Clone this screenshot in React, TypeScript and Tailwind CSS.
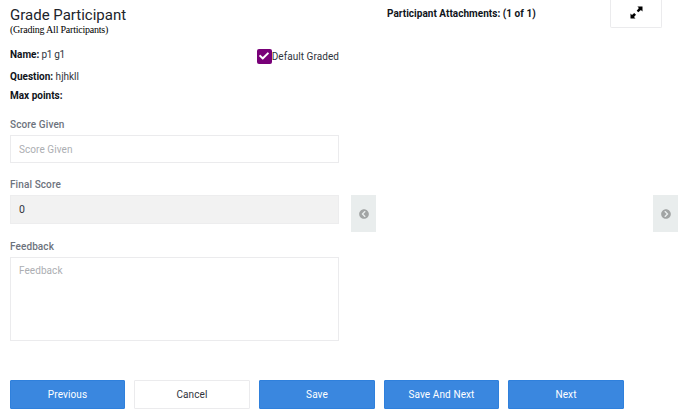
import { FaCheck, FaChevronCircleLeft, FaChevronCircleRight } from 'react-icons/fa'

interface ActionButtonProps {
  label: string
  width: string
  outline?: boolean
}

const ActionButton = ({ label, width, outline }: ActionButtonProps) => (
  <button
    className={`h-[29px] shrink-0 rounded-[1px] border text-[10px] tracking-[0.1px] ${width} ${
      outline ? 'border-[#ebebed] bg-white text-[#30343c]' : 'border-[#2f80dc] bg-[#3a87df] text-white'
    }`}
  >
    {label}
  </button>
)

const FieldLabel = ({ children }: { children: string }) => (
  <div className="h-[18px] pt-px text-[10px] leading-[14px] font-medium tracking-[0.1px] text-[#6d737d]">{children}</div>
)

const ExpandIcon = () => (
  <svg viewBox="0 0 13 13" className="h-[13px] w-[13px]" fill="#000">
    <path d="M7.4 0.5h5.1v5L10.9 4.1 8.3 6.3 6.7 4.7 8.9 2.1zM0.5 12.5V7.5L2 9 4.2 7 6 8.8 4 11 5.5 12.5z" />
  </svg>
)

const App = () => (
  <div className="flex h-[417px] w-[688px] flex-col overflow-hidden bg-white pl-[10px] font-[Roboto,sans-serif] text-[#15191f]">
    <div className="flex h-[380px]">
      <section className="w-[329px] pt-[6px]">
        <h1 className="h-[17px] text-[15px] leading-[18px] text-[#20242b]">Grade Participant</h1>
        <p className="h-[24px] font-['Liberation_Serif',serif] text-[10px] leading-[14px] tracking-[-0.22px] text-black">
          (Grading All Participants)
        </p>

        <div className="flex h-[18px] items-center justify-between">
          <p className="mt-[-3px] text-[10px] leading-[14px] tracking-[-0.3px] text-[#30343c]">
            <b className="tracking-normal text-[#10141a]">Name:</b> p1 g1
          </p>
          <label className="flex items-center text-[10px] tracking-[0.06px] text-[#30343c]">
            <span className="flex h-[15px] w-[15px] items-center justify-center rounded-[2px] bg-[#780078]">
              <FaCheck className="h-[10px] w-[10px] text-white" />
            </span>
            Default Graded
          </label>
        </div>
        <p className="mt-[5px] h-[19px] text-[10px] leading-[14px] text-[#30343c]">
          <b className="text-[#10141a]">Question:</b> hjhkll
        </p>
        <p className="h-[28px] text-[10px] leading-[14px] font-bold text-[#10141a]">Max points:</p>

        <FieldLabel>Score Given</FieldLabel>
        <input
          className="block h-[28px] w-full border border-[#ebebed] px-2 text-[10px] tracking-[0.06px] placeholder:text-[#acaeb2]"
          placeholder="Score Given"
        />
        <div className="mt-[14px]">
          <FieldLabel>Final Score</FieldLabel>
          <input
            className="block h-[29px] w-full border border-[#ededee] bg-[#f2f2f2] px-2 text-[10.5px] text-[#30343c]"
            defaultValue="0"
            readOnly
          />
        </div>
        <div className="mt-[15px]">
          <FieldLabel>Feedback</FieldLabel>
          <textarea
            className="block h-[84px] w-full resize-none border border-[#ebebed] px-2 py-[6px] text-[10px] leading-[14px] tracking-[0.06px] placeholder:text-[#acaeb2]"
            placeholder="Feedback"
          />
        </div>
      </section>

      <section className="ml-3 flex w-[327px] flex-col">
        <div className="flex h-[195px] items-start justify-between pr-[16px] pl-[36px]">
          <h2 className="pt-[7px] text-[10px] leading-[14px] font-bold tracking-[0.03px] text-[#10141a]">
            Participant Attachments: (1 of 1)
          </h2>
          <button className="flex h-[28px] w-[52px] justify-center rounded-b-[2px] border border-t-0 border-[#ebebed] pt-[6px]">
            <ExpandIcon />
          </button>
        </div>
        <div className="flex justify-between">
          <button className="flex h-[37px] w-[25px] items-center justify-center bg-[#e9eded]">
            <FaChevronCircleLeft className="h-[10px] w-[10px] text-[#a1a4a4]" />
          </button>
          <button className="flex h-[37px] w-[25px] items-center justify-center bg-[#e9eded]">
            <FaChevronCircleRight className="h-[10px] w-[10px] text-[#a1a4a4]" />
          </button>
        </div>
      </section>
    </div>

    <div className="flex gap-[9px]">
      <ActionButton label="Previous" width="w-[115px]" />
      <ActionButton label="Cancel" width="w-[116px]" outline />
      <ActionButton label="Save" width="w-[116px]" />
      <ActionButton label="Save And Next" width="w-[115px]" />
      <ActionButton label="Next" width="w-[116px]" />
    </div>
  </div>
)

export default App
